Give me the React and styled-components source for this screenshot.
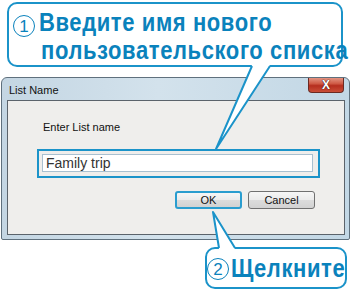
import React from 'react';
import styled, { createGlobalStyle } from 'styled-components';

const GlobalStyle = createGlobalStyle`
  html, body {
    margin: 0;
    padding: 0;
    background: #fff;
  }
`;

const Page = styled.div`
  position: relative;
  width: 351px;
  height: 290px;
  padding-top: 2px;
  box-sizing: border-box;
  overflow: hidden;
  font-family: 'Liberation Sans', Arial, sans-serif;
`;

const Callout = styled.div`
  box-sizing: border-box;
  width: ${(p) => p.w}px;
  height: ${(p) => p.h}px;
  margin-left: ${(p) => p.left}px;
  margin-top: ${(p) => p.top || 0}px;
  border: 2px solid #1b93c9;
  border-radius: 10px;
  background: #fff;
  display: grid;
  grid-template-columns: auto 1fr;
  column-gap: ${(p) => p.gap}px;
  align-items: start;
  padding: ${(p) => p.pad};
  color: #0a82bc;
`;

const CircleNum = styled.span`
  box-sizing: border-box;
  width: 22px;
  height: 22px;
  border: 1.5px solid #0a82bc;
  border-radius: 50%;
  display: flex;
  align-items: center;
  justify-content: center;
  font-family: 'Liberation Sans', Arial, sans-serif;
  font-size: 17px;
  font-weight: normal;
  line-height: 1;
  margin-top: ${(p) => p.top}px;
`;

const Headline = styled.div`
  font-weight: bold;
  font-size: 22px;
  line-height: 24px;
  white-space: nowrap;
  letter-spacing: 0.6px;
  transform: scaleY(1.15);
  transform-origin: 0 50%;
`;

const Dialog = styled.div`
  box-sizing: border-box;
  width: 349px;
  height: 163px;
  margin: 10px 0 0 1px;
  border: 1px solid #5f707d;
  border-radius: 6px 6px 2px 2px;
  background: linear-gradient(90deg, #c4d6e3 0%, #d3e2ec 45%, #c2d7e5 100%);
  display: flex;
  flex-direction: column;
  padding: 0 4px 4px 5px;
`;

const TitleBar = styled.div`
  height: 22px;
  display: flex;
  align-items: flex-start;
  justify-content: space-between;
`;

const TitleText = styled.span`
  font-size: 11px;
  color: #111;
  margin: 6px 0 0 2px;
`;

const CloseButton = styled.div`
  box-sizing: border-box;
  width: 36px;
  height: 15px;
  margin-right: 1px;
  border: 1px solid #6b2a22;
  border-top: none;
  border-radius: 0 0 4px 4px;
  background: linear-gradient(180deg, #e39482 0%, #cf5a45 40%, #b52e1e 55%, #c94e38 100%);
  display: flex;
  align-items: center;
  justify-content: center;
  color: #fff;
  font-size: 12px;
  font-weight: bold;
  text-shadow: 0 0 1px #3a1a14, 0 0 1px #3a1a14;
`;

const Client = styled.div`
  flex: 1;
  box-sizing: border-box;
  border: 1px solid #5b636b;
  background: #efeeec;
  padding: 20px 0 0 29px;
  display: flex;
  flex-direction: column;
`;

const Label = styled.div`
  font-size: 11px;
  color: #111;
  margin-left: 6px;
`;

const Highlight = styled.div`
  box-sizing: border-box;
  width: 283px;
  height: 29px;
  margin-top: 16px;
  border: 2px solid #1b93c9;
  padding: 3px 5px 4px 3px;
`;

const Field = styled.div`
  box-sizing: border-box;
  height: 18px;
  border: 1px solid #a9c0d0;
  background: #fff;
  font-size: 14px;
  color: #333;
  padding-left: 3px;
  line-height: 16px;
`;

const ButtonRow = styled.div`
  display: flex;
  gap: 6px;
  margin: 13px 0 0 138px;
`;

const Button = styled.div`
  box-sizing: border-box;
  width: 67px;
  height: 18px;
  border: ${(p) => (p.focus ? '2px solid #2a9dcf' : '1px solid #707070')};
  border-radius: 3px;
  background: linear-gradient(180deg, #f6f6f6 0%, #ebebeb 50%, #dcdcdc 51%, #d2d2d2 100%);
  display: flex;
  align-items: center;
  justify-content: center;
  font-size: 11px;
  color: #111;
`;

const Overlay = styled.svg`
  position: absolute;
  left: 0;
  top: 0;
  pointer-events: none;
`;

export default function App() {
  return (
    <>
      <GlobalStyle />
      <Page>
        <Callout w={336} h={65} left={7} gap={4} pad="9px 0 0 4px">
          <CircleNum top={2}>1</CircleNum>
          <Headline>
            Введите имя нового
            <br />
            <span style={{ marginLeft: 2 }}>пользовательского списка</span>
          </Headline>
        </Callout>

        <Dialog>
          <TitleBar>
            <TitleText>List Name</TitleText>
            <CloseButton>X</CloseButton>
          </TitleBar>
          <Client>
            <Label>Enter List name</Label>
            <Highlight>
              <Field>Family trip</Field>
            </Highlight>
            <ButtonRow>
              <Button focus>OK</Button>
              <Button>Cancel</Button>
            </ButtonRow>
          </Client>
        </Dialog>

        <Callout w={142} h={42} left={205} top={7} gap={2} pad="8px 0 0 0">
          <CircleNum top={1}>2</CircleNum>
          <Headline>Щелкните</Headline>
        </Callout>

        <Overlay width="351" height="290" viewBox="0 0 351 290">
          <polygon points="252,65 270,65 216,149" fill="#fff" />
          <polyline points="252,66 216,149 270,66" fill="none" stroke="#1b93c9" strokeWidth="2" strokeLinejoin="round" />
          <polygon points="219,249 235,249 213,212" fill="#fff" />
          <polyline points="219,248 213,212 235,248" fill="none" stroke="#1b93c9" strokeWidth="2" strokeLinejoin="round" />
        </Overlay>
      </Page>
    </>
  );
}
